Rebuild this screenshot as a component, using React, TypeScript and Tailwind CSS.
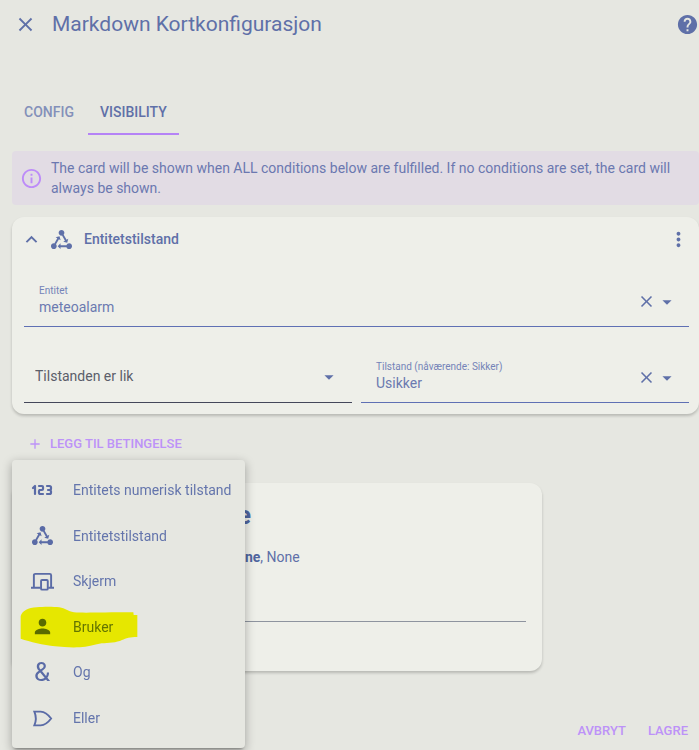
import React, { useState } from 'react'
import {
  MdAdd,
  MdArrowDropDown,
  MdClose,
  MdHelp,
  MdInfoOutline,
  MdKeyboardArrowUp,
  MdMoreVert,
  MdPerson,
} from 'react-icons/md'
import { TbNumber123 } from 'react-icons/tb'

const StateMachineIcon = () => (
  <svg viewBox="0 0 24 24" className="size-[23px]" fill="currentColor" aria-hidden="true">
    <path d="M6.27 17.05C6.72 17.58 7 18.25 7 19C7 20.66 5.66 22 4 22S1 20.66 1 19 2.34 16 4 16C4.18 16 4.36 16 4.53 16.05L7.6 10.69L5.86 9.7L9.95 8.58L11.07 12.67L9.33 11.68L6.27 17.05M20 16C18.7 16 17.6 16.84 17.18 18H11V16L8 19L11 22V20H17.18C17.6 21.16 18.7 22 20 22C21.66 22 23 20.66 23 19S21.66 16 20 16M12 8C12.18 8 12.36 8 12.53 7.95L15.6 13.31L13.86 14.3L17.95 15.42L19.07 11.33L17.33 12.32L14.27 6.95C14.72 6.42 15 5.75 15 5C15 3.34 13.66 2 12 2S9 3.34 9 5 10.34 8 12 8Z" />
  </svg>
)

const ScreenIcon = () => (
  <svg viewBox="0 0 24 24" className="size-[23px]" fill="none" stroke="currentColor" aria-hidden="true">
    <path strokeWidth="2" d="M3 18V5.5A1.5 1.5 0 0 1 4.5 4H19.5A1.5 1.5 0 0 1 21 5.5V18" />
    <path strokeWidth="2" d="M0 18.5H10M18 18.5H24" />
    <rect strokeWidth="2" x="10.5" y="10.5" width="7" height="10" rx="1" />
  </svg>
)

const OrGateIcon = () => (
  <svg viewBox="0 0 24 24" className="size-[23px]" fill="none" stroke="currentColor" strokeWidth="2" aria-hidden="true">
    <path d="M3.5 4.8H10C14 5 18 8 21 12C18 16 14 19 10 19.2H3.5C5.5 14.5 5.5 9.5 3.5 4.8Z" />
  </svg>
)

const conditions = [
  { label: 'Entitets numerisk tilstand', icon: <TbNumber123 size={24} strokeWidth={2.2} /> },
  { label: 'Entitetstilstand', icon: <StateMachineIcon /> },
  { label: 'Skjerm', icon: <ScreenIcon /> },
  { label: 'Bruker', icon: <MdPerson size={23} />, marked: true },
  { label: 'Og', icon: <span className="text-[26px] leading-6">&amp;</span> },
  { label: 'Eller', icon: <OrGateIcon /> },
]

const Marker = () => (
  <svg
    viewBox="60 156 354 126"
    className="pointer-events-none absolute left-2 top-1/2 h-[42px] w-[118px] -translate-y-1/2 mix-blend-multiply"
    aria-hidden="true"
  >
    <path
      fill="#ffff00"
      d="M62 186C68 170 84 161 110 160C130 158 160 158 178 160C196 163 204 172 222 175C250 177 300 175 400 175L401 183H412V249C390 249 378 253 366 258C350 266 325 267 305 268C280 272 262 279 240 280C215 281 190 280 165 277C130 272 90 264 62 254Z"
    />
  </svg>
)

const ComboField = (props: { id: string; label: string; initial: string }) => {
  const { id, label, initial } = props
  const [value, setValue] = useState(initial)

  return (
    <div className="flex h-[52px] items-center border-b border-[#5f70b4] pl-[15px] pr-[11px]">
      <div className="flex min-w-0 flex-1 flex-col pb-1">
        <label htmlFor={id} className="text-[10px] leading-4 text-[#7483b8]">{label}</label>
        <input
          id={id}
          value={value}
          onChange={(e) => setValue(e.target.value)}
          className="w-full bg-transparent text-sm leading-4 text-[#6b7ab0] outline-none"
        />
      </div>
      <button aria-label="Tøm" className="pt-0.5" onClick={() => setValue('')}><MdClose size={19} /></button>
      <button aria-label="Åpne" className="pt-0.5"><MdArrowDropDown size={22} /></button>
    </div>
  )
}

const AddCondition = () => (
  <div className="relative mt-[13px]">
    <button className="flex h-[33px] items-center gap-[7px] pl-[15px] text-[13px] font-medium text-[#bd92f8]">
      <MdAdd size={16} />
      LEGG TIL BETINGELSE
    </button>
    <ul className="absolute left-0 top-full z-10 flex min-h-[288px] w-[233px] flex-col rounded bg-[#e6e7e1] py-[7px] shadow-[0_3px_3px_-2px_rgba(0,0,0,0.35),0_3px_10px_1px_rgba(0,0,0,0.25)]">
      {conditions.map((item) => (
        <li key={item.label} className="relative flex flex-1">
          <button className="flex w-full items-center gap-[19px] pl-[18px] text-left text-sm text-[#6475ac]">
            <span className="flex w-6 justify-center text-[#5a6ba6]">{item.icon}</span>
            {item.label}
          </button>
          {item.marked && <Marker />}
        </li>
      ))}
    </ul>
  </div>
)

const App = () => {
  return (
    <div className="flex min-h-screen flex-col bg-[#e6e7e1] font-[Roboto,sans-serif] text-[#5f70a8]">
      <header className="flex h-12 items-center pl-[14px]">
        <button aria-label="Lukk"><MdClose size={23} /></button>
        <h1 className="flex-1 pl-[15px] text-[21px] leading-8">Markdown Kortkonfigurasjon</h1>
        <a href="#help" aria-label="Hjelp"><MdHelp size={23} /></a>
      </header>

      <main className="flex-1 pl-3">
        <div role="tablist" className="mt-[42px] flex gap-0.5 text-sm font-medium">
          <button role="tab" aria-selected="false" className="h-[45px] border-b-2 border-transparent px-3 text-[#8390b9]">CONFIG</button>
          <button role="tab" aria-selected="true" className="h-[45px] border-b-2 border-[#b583f6] px-3">VISIBILITY</button>
        </div>

        <div role="note" className="mt-4 flex items-center gap-2 rounded bg-[#e2dce4] py-[7px] pl-2 pr-4">
          <MdInfoOutline size={23} className="shrink-0 text-[#bd8cf8]" />
          <p className="text-sm leading-5 text-[#6b78b0]">
            The card will be shown when ALL conditions below are fulfilled. If no conditions are set, the card will always be shown.
          </p>
        </div>

        <section className="mt-3 rounded-xl bg-[#eeefe9] pb-[11px] shadow-[0_2px_3px_rgba(0,0,0,0.2)]">
          <div className="flex h-11 items-center pl-2 pr-[9px]">
            <button aria-label="Skjul"><MdKeyboardArrowUp size={23} /></button>
            <span className="pl-[7px] pr-[11px]"><StateMachineIcon /></span>
            <h2 className="flex-1 text-sm font-medium">Entitetstilstand</h2>
            <button aria-label="Meny"><MdMoreVert size={23} /></button>
          </div>
          <div className="flex flex-col gap-6 pl-3 pr-[10px] pt-[14px]">
            <ComboField id="entity" label="Entitet" initial="meteoalarm" />
            <div className="grid grid-cols-2 gap-[9px]">
              <div className="relative flex h-[52px] items-center border-b border-[#44475a]">
                <select aria-label="Betingelse" className="h-full w-full appearance-none bg-transparent pb-0.5 pl-[11px] text-sm text-[#5b5e69] outline-none">
                  <option>Tilstanden er lik</option>
                </select>
                <MdArrowDropDown size={22} className="pointer-events-none absolute right-3" />
              </div>
              <ComboField id="state" label="Tilstand (nåværende: Sikker)" initial="Usikker" />
            </div>
          </div>
        </section>

        <AddCondition />

        <section className="mt-[23px] w-full max-w-[530px] rounded-xl bg-[#eeefe9] px-4 pb-[49px] pt-4 shadow-[0_2px_3px_rgba(0,0,0,0.2)]">
          <div className="pl-[209px]">
            <h2 className="text-[26px] font-bold leading-8 text-[#4f659f]">e</h2>
            <p className="pt-4 text-sm leading-5"><b className="text-[#4f659f]">one</b>, None</p>
          </div>
          <hr className="mt-[54px] border-[#8e949f]" />
        </section>
      </main>

      <footer className="flex h-[38px] items-center justify-end gap-[22px] pr-[11px] text-[13px] font-medium text-[#bd92f8]">
        <button>AVBRYT</button>
        <button>LAGRE</button>
      </footer>
    </div>
  )
}

export default App
